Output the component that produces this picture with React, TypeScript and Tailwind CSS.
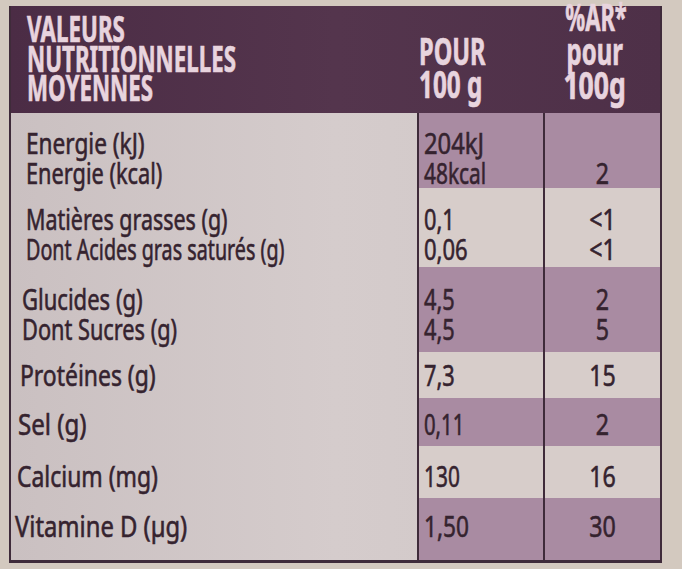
const FONT = "font-['Noto_Sans','Liberation_Sans',sans-serif]";

type Row = {
  h: string;
  pb: string;
  pl: string;
  labels: { text: string; sx: string }[];
  values: { text: string; sx: string }[];
  ar: string[];
  tint: boolean;
};

const ROWS: Row[] = [
  {
    h: 'h-[75px]',
    pb: 'pb-0',
    pl: 'pl-[15px]',
    labels: [
      { text: 'Energie (kJ)', sx: 'scale-x-[0.78]' },
      { text: 'Energie (kcal)', sx: 'scale-x-[0.75]' },
    ],
    values: [
      { text: '204kJ', sx: 'scale-x-[0.82]' },
      { text: '48kcal', sx: 'scale-x-[0.72]' },
    ],
    ar: ['', '2'],
    tint: true,
  },
  {
    h: 'h-[79px]',
    pb: 'pb-[3px]',
    pl: 'pl-[15px]',
    labels: [
      { text: 'Matières grasses (g)', sx: 'scale-x-[0.74]' },
      { text: 'Dont Acides gras saturés (g)', sx: 'scale-x-[0.68]' },
    ],
    values: [
      { text: '0,1', sx: 'scale-x-[0.75]' },
      { text: '0,06', sx: 'scale-x-[0.76]' },
    ],
    ar: ['<1', '<1'],
    tint: false,
  },
  {
    h: 'h-[85px]',
    pb: 'pb-[8px]',
    pl: 'pl-[11px]',
    labels: [
      { text: 'Glucides (g)', sx: 'scale-x-[0.76]' },
      { text: 'Dont Sucres (g)', sx: 'scale-x-[0.75]' },
    ],
    values: [
      { text: '4,5', sx: 'scale-x-[0.75]' },
      { text: '4,5', sx: 'scale-x-[0.75]' },
    ],
    ar: ['2', '5'],
    tint: true,
  },
  {
    h: 'h-[46px]',
    pb: 'pb-[8px]',
    pl: 'pl-[9px]',
    labels: [{ text: 'Protéines (g)', sx: 'scale-x-[0.79]' }],
    values: [{ text: '7,3', sx: 'scale-x-[0.75]' }],
    ar: ['15'],
    tint: false,
  },
  {
    h: 'h-[48px]',
    pb: 'pb-[7px]',
    pl: 'pl-[7px]',
    labels: [{ text: 'Sel (g)', sx: 'scale-x-[0.83]' }],
    values: [{ text: '0,11', sx: 'scale-x-[0.7]' }],
    ar: ['2'],
    tint: true,
  },
  {
    h: 'h-[52px]',
    pb: 'pb-[7px]',
    pl: 'pl-[6px]',
    labels: [{ text: 'Calcium (mg)', sx: 'scale-x-[0.79]' }],
    values: [{ text: '130', sx: 'scale-x-[0.72]' }],
    ar: ['16'],
    tint: false,
  },
  {
    h: 'h-[62px]',
    pb: 'pb-[19px]',
    pl: 'pl-[4px]',
    labels: [{ text: 'Vitamine D (µg)', sx: 'scale-x-[0.82]' }],
    values: [{ text: '1,50', sx: 'scale-x-[0.78]' }],
    ar: ['30'],
    tint: true,
  },
];

function NutrientRow({ row }: { row: Row }) {
  const cell = row.tint ? 'bg-[#a98ba2]' : 'bg-[#d7cdca]';
  return (
    <div className={`flex ${row.h}`}>
      {/* label */}
      <div className={`flex w-[406px] flex-col justify-end ${row.pb} ${row.pl}`}>
        {row.labels.map((l) => (
          <div key={l.text} className="h-[30px] whitespace-nowrap">
            <span className={`inline-block origin-left ${l.sx}`}>{l.text}</span>
          </div>
        ))}
      </div>
      {/* pour 100 g */}
      <div
        className={`flex w-[126px] flex-col justify-end border-l-2 border-[#3f2b3a] pl-[5px] ${row.pb} ${cell}`}
      >
        {row.values.map((v, i) => (
          <div key={i} className="h-[30px] whitespace-nowrap">
            <span className={`inline-block origin-left ${v.sx}`}>{v.text}</span>
          </div>
        ))}
      </div>
      {/* %AR */}
      <div
        className={`flex w-[117px] flex-col justify-end border-l-2 border-[#3f2b3a] ${row.pb} ${cell}`}
      >
        {row.ar.map((a, i) => (
          <div key={i} className="h-[30px] text-center whitespace-nowrap">
            <span className="inline-block origin-center scale-x-[0.8]">{a}</span>
          </div>
        ))}
      </div>
    </div>
  );
}

export default function App() {
  return (
    <div
      className={`h-[569px] w-[682px] overflow-hidden bg-[#d3c9bf] pt-[6px] pl-[9px] ${FONT}`}
    >
      <div className="w-[653px] border-x-2 border-b-[3px] border-[#3f2b3a] text-[29px] leading-[30px] text-[#35232f] [-webkit-text-stroke:0.6px_#35232f]">
        {/* Header */}
        <div className="flex h-[107px] bg-gradient-to-r from-[#4b2c45] via-[#54354d] to-[#4e3048] font-bold text-[#e8d4de] [-webkit-text-stroke:0.7px_#e8d4de]">
          <div className="w-[406px] pt-[8px] pl-[16px] text-[36px] leading-[29.5px]">
            <div className="whitespace-nowrap">
              <span className="inline-block origin-left scale-x-[0.62]">VALEURS</span>
            </div>
            <div className="whitespace-nowrap">
              <span className="inline-block origin-left scale-x-[0.62]">NUTRITIONNELLES</span>
            </div>
            <div className="whitespace-nowrap">
              <span className="inline-block origin-left scale-x-[0.62]">MOYENNES</span>
            </div>
          </div>
          <div className="flex w-[126px] flex-col justify-end pb-[13px] pl-[2px] text-[38px] leading-[33px]">
            <div className="whitespace-nowrap">
              <span className="inline-block origin-left scale-x-[0.62]">POUR</span>
            </div>
            <div className="whitespace-nowrap">
              <span className="inline-block origin-left scale-x-[0.64]">100 g</span>
            </div>
          </div>
          <div className="flex w-[117px] flex-col justify-end pr-[14px] pb-[12px] text-center text-[38px] leading-[34px]">
            <div className="whitespace-nowrap">
              <span className="inline-block origin-center scale-x-[0.58]">%AR*</span>
            </div>
            <div className="whitespace-nowrap">
              <span className="inline-block origin-center scale-x-[0.63]">pour</span>
            </div>
            <div className="whitespace-nowrap">
              <span className="inline-block origin-center scale-x-[0.7]">100g</span>
            </div>
          </div>
        </div>

        {/* Body */}
        <div className="bg-gradient-to-r from-[#cac0c1] via-[#d5cccc] to-[#cfc6c6]">
          {ROWS.map((r, i) => (
            <NutrientRow key={i} row={r} />
          ))}
        </div>
      </div>
    </div>
  );
}
